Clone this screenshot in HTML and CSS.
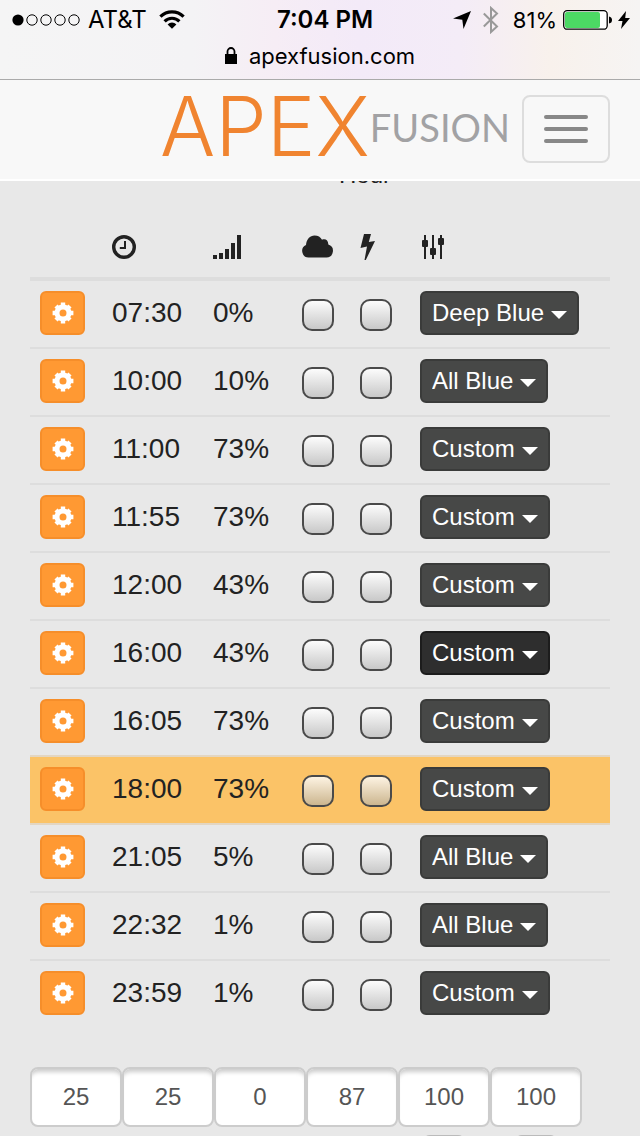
FILE: index.html
```html
<!DOCTYPE html>
<html lang="en">

<head>
    <meta charset="UTF-8">
    <title>Apex Fusion</title>
    <meta name="viewport" content="width=device-width, initial-scale=1.0" />
    <link rel="stylesheet" href="styles.css">
</head>

<body>
<svg class="symbols" aria-hidden="true">
    <symbol id="cog" viewBox="0 0 22 22">
        <g fill="none" stroke="#fff">
            <circle cx="11" cy="11" r="6" stroke-width="5" />
            <path stroke-width="4.4" d="M11 .6v4M11 17.400v4M.6 11h4M17.400 11h4M4 4l2.500 2.500M15.500 15.500L18 18M18 4l-2.500 2.500M6.500 15.500L4 18" />
        </g>
    </symbol>
</svg>
<header class="status">
    <div class="status-bar">
        <div class="status-left">
            <svg width="68" height="12" viewBox="0 0 68 12">
                <circle cx="6" cy="6" r="5.6" />
                <g fill="none" stroke="#000">
                    <circle cx="20" cy="6" r="5.2" /><circle cx="34" cy="6" r="5.2" /><circle cx="48" cy="6" r="5.2" /><circle cx="62" cy="6" r="5.2" />
                </g>
            </svg>
            <span class="carrier">AT&amp;T</span>
            <svg width="26" height="20" viewBox="0 0 26 20">
                <g fill="none" stroke="#000" stroke-width="3.2">
                    <path d="M1.4 6.6a16.4 16.4 0 0 1 23.2 0" />
                    <path d="M5.6 11.3a10.5 10.5 0 0 1 14.8 0" />
                </g>
                <path d="M8.6 14.4a6.2 6.2 0 0 1 8.8 0L13 18.8z" />
            </svg>
        </div>
        <span class="time">7:04 PM</span>
        <div class="status-right">
            <div class="radios">
                <svg width="18" height="18" viewBox="0 0 18 18"><path d="M18 0L10.5 18 9.3 8.7 0 7.5z" /></svg>
                <svg width="16" height="28" viewBox="0 0 16 28"><path d="M.8 7.5L14 20.5 8 26V2l6 5.500L.8 20.500" fill="none" stroke="#999" stroke-width="2" /></svg>
            </div>
            <span>81%</span>
            <svg width="49" height="20" viewBox="0 0 49 20">
                <rect x=".7" y=".7" width="43.500" height="18.500" rx="3.500" fill="#fff" stroke="#000" stroke-width="1.300" />
                <rect x="2" y="2" width="35" height="16" rx="2" fill="#4cd964" />
                <path d="M46 6.500q3 .5 3 3.500t-3 3.500z" />
            </svg>
            <svg width="12" height="18" viewBox="0 0 12 18"><path d="M8 0L0 10h4.500L3 18l9-11H7.200z" /></svg>
        </div>
    </div>
    <div class="address">
        <svg width="12" height="17" viewBox="0 0 12 17">
            <path d="M0 7h12v10H0z" />
            <path d="M2.500 8V4.500a3.500 3.500 0 0 1 7 0V8" fill="none" stroke="#000" stroke-width="1.800" />
        </svg>
        <span>apexfusion.com</span>
    </div>
</header>

<nav class="navbar">
    <a class="brand" href="#"><span class="brand-apex">APEX</span><span class="brand-fusion">FUSION</span></a>
    <button class="toggle" type="button" aria-label="Toggle navigation">
        <span class="icon-bar"></span>
        <span class="icon-bar"></span>
        <span class="icon-bar"></span>
    </button>
</nav>

<main class="content">
    <div class="axis-label">Hour</div>
    <table class="schedule">
        <colgroup>
            <col class="col-edit"><col class="col-time"><col class="col-level"><col class="col-cloud"><col class="col-storm"><col>
        </colgroup>
        <thead>
            <tr>
                <th></th>
                <th><svg role="img" aria-label="Time" width="24" height="24" viewBox="0 0 24 24" fill="none" stroke="#222"><circle cx="12" cy="12" r="10.300" stroke-width="3.400" /><path d="M13 6v7H7.800" stroke-width="2" /></svg></th>
                <th><svg role="img" aria-label="Intensity" width="28" height="24" viewBox="0 0 28 24" fill="#222"><path d="M0 20h4v4H0zM6 18h4v6H6zM12 14h4v10h-4zM18 8h4v16h-4zM24 0h4v24h-4z" /></svg></th>
                <th><svg role="img" aria-label="Clouds" width="31" height="24" viewBox="0 0 31 24" fill="#222"><path d="M7 22.500a6.500 6.500 0 0 1-3-12.400C4.500 4 8 .5 12.500.5c3.500 0 6 1.500 7.500 4.300 3.400-1.500 6.500.8 6.300 4.800A6.600 6.600 0 0 1 24.500 22.500z" /></svg></th>
                <th><svg role="img" aria-label="Lightning" width="15" height="26" viewBox="0 0 15 26" fill="#222"><path d="M4 0h7L8.800 8 15 7 5.800 26H4.500L7 12.500.5 14z" /></svg></th>
                <th><svg role="img" aria-label="Profile" width="24" height="24" viewBox="0 0 24 24" fill="#222"><path d="M4 0h2v24H4zM12 0h2v24h-2zM20 0h2v24h-2z" /><rect x="2" y="5" width="6" height="7" rx="1" /><rect x="10" y="13" width="6" height="7" rx="1" /><rect x="18" y="3" width="6" height="7" rx="1" /></svg></th>
            </tr>
        </thead>
        <tbody>
            <tr>
                <td><button class="edit" type="button" aria-label="Edit 07:30"><svg><use href="#cog" /></svg></button></td>
                <td>07:30</td>
                <td>0%</td>
                <td><input type="checkbox" aria-label="Clouds 07:30"></td>
                <td><input type="checkbox" aria-label="Lightning 07:30"></td>
                <td><select class="profile" aria-label="Profile 07:30"><option selected>Deep Blue</option><option>All Blue</option><option>Custom</option></select></td>
            </tr>
            <tr>
                <td><button class="edit" type="button" aria-label="Edit 10:00"><svg><use href="#cog" /></svg></button></td>
                <td>10:00</td>
                <td>10%</td>
                <td><input type="checkbox" aria-label="Clouds 10:00"></td>
                <td><input type="checkbox" aria-label="Lightning 10:00"></td>
                <td><select class="profile" aria-label="Profile 10:00"><option>Deep Blue</option><option selected>All Blue</option><option>Custom</option></select></td>
            </tr>
            <tr>
                <td><button class="edit" type="button" aria-label="Edit 11:00"><svg><use href="#cog" /></svg></button></td>
                <td>11:00</td>
                <td>73%</td>
                <td><input type="checkbox" aria-label="Clouds 11:00"></td>
                <td><input type="checkbox" aria-label="Lightning 11:00"></td>
                <td><select class="profile" aria-label="Profile 11:00"><option>Deep Blue</option><option>All Blue</option><option selected>Custom</option></select></td>
            </tr>
            <tr>
                <td><button class="edit" type="button" aria-label="Edit 11:55"><svg><use href="#cog" /></svg></button></td>
                <td>11:55</td>
                <td>73%</td>
                <td><input type="checkbox" aria-label="Clouds 11:55"></td>
                <td><input type="checkbox" aria-label="Lightning 11:55"></td>
                <td><select class="profile" aria-label="Profile 11:55"><option>Deep Blue</option><option>All Blue</option><option selected>Custom</option></select></td>
            </tr>
            <tr>
                <td><button class="edit" type="button" aria-label="Edit 12:00"><svg><use href="#cog" /></svg></button></td>
                <td>12:00</td>
                <td>43%</td>
                <td><input type="checkbox" aria-label="Clouds 12:00"></td>
                <td><input type="checkbox" aria-label="Lightning 12:00"></td>
                <td><select class="profile" aria-label="Profile 12:00"><option>Deep Blue</option><option>All Blue</option><option selected>Custom</option></select></td>
            </tr>
            <tr>
                <td><button class="edit" type="button" aria-label="Edit 16:00"><svg><use href="#cog" /></svg></button></td>
                <td>16:00</td>
                <td>43%</td>
                <td><input type="checkbox" aria-label="Clouds 16:00"></td>
                <td><input type="checkbox" aria-label="Lightning 16:00"></td>
                <td><select class="profile active" aria-label="Profile 16:00"><option>Deep Blue</option><option>All Blue</option><option selected>Custom</option></select></td>
            </tr>
            <tr>
                <td><button class="edit" type="button" aria-label="Edit 16:05"><svg><use href="#cog" /></svg></button></td>
                <td>16:05</td>
                <td>73%</td>
                <td><input type="checkbox" aria-label="Clouds 16:05"></td>
                <td><input type="checkbox" aria-label="Lightning 16:05"></td>
                <td><select class="profile" aria-label="Profile 16:05"><option>Deep Blue</option><option>All Blue</option><option selected>Custom</option></select></td>
            </tr>
            <tr class="current">
                <td><button class="edit" type="button" aria-label="Edit 18:00"><svg><use href="#cog" /></svg></button></td>
                <td>18:00</td>
                <td>73%</td>
                <td><input type="checkbox" aria-label="Clouds 18:00"></td>
                <td><input type="checkbox" aria-label="Lightning 18:00"></td>
                <td><select class="profile" aria-label="Profile 18:00"><option>Deep Blue</option><option>All Blue</option><option selected>Custom</option></select></td>
            </tr>
            <tr>
                <td><button class="edit" type="button" aria-label="Edit 21:05"><svg><use href="#cog" /></svg></button></td>
                <td>21:05</td>
                <td>5%</td>
                <td><input type="checkbox" aria-label="Clouds 21:05"></td>
                <td><input type="checkbox" aria-label="Lightning 21:05"></td>
                <td><select class="profile" aria-label="Profile 21:05"><option>Deep Blue</option><option selected>All Blue</option><option>Custom</option></select></td>
            </tr>
            <tr>
                <td><button class="edit" type="button" aria-label="Edit 22:32"><svg><use href="#cog" /></svg></button></td>
                <td>22:32</td>
                <td>1%</td>
                <td><input type="checkbox" aria-label="Clouds 22:32"></td>
                <td><input type="checkbox" aria-label="Lightning 22:32"></td>
                <td><select class="profile" aria-label="Profile 22:32"><option>Deep Blue</option><option selected>All Blue</option><option>Custom</option></select></td>
            </tr>
            <tr>
                <td><button class="edit" type="button" aria-label="Edit 23:59"><svg><use href="#cog" /></svg></button></td>
                <td>23:59</td>
                <td>1%</td>
                <td><input type="checkbox" aria-label="Clouds 23:59"></td>
                <td><input type="checkbox" aria-label="Lightning 23:59"></td>
                <td><select class="profile" aria-label="Profile 23:59"><option>Deep Blue</option><option>All Blue</option><option selected>Custom</option></select></td>
            </tr>
        </tbody>
    </table>

    <div class="channels">
        <div class="channel"><input class="value" type="text" value="25" aria-label="Channel 1"><input class="slider" type="range" value="25" aria-label="Channel 1 level"></div>
        <div class="channel"><input class="value" type="text" value="25" aria-label="Channel 2"><input class="slider" type="range" value="25" aria-label="Channel 2 level"></div>
        <div class="channel"><input class="value" type="text" value="0" aria-label="Channel 3"><input class="slider" type="range" value="0" aria-label="Channel 3 level"></div>
        <div class="channel"><input class="value" type="text" value="87" aria-label="Channel 4"><input class="slider" type="range" value="87" aria-label="Channel 4 level"></div>
        <div class="channel"><input class="value" type="text" value="100" aria-label="Channel 5"><input class="slider" type="range" value="100" aria-label="Channel 5 level"></div>
        <div class="channel"><input class="value" type="text" value="100" aria-label="Channel 6"><input class="slider" type="range" value="100" aria-label="Channel 6 level"></div>
    </div>
</main>
</body>

</html>
```

FILE: styles.css
```css
* {
    box-sizing: border-box;
    margin: 0;
    padding: 0;
}

body {
    display: flex;
    flex-direction: column;
    height: 100vh;
    overflow: hidden;
    background: #e8e8e8;
    color: #222;
    font-family: "Liberation Sans", Arial, sans-serif;
    font-size: 28px;
}

svg {
    display: block;
    flex: none;
}

.symbols {
    display: none;
}

/* status bar and address */
.status {
    flex: none;
    border-bottom: 1px solid #aaa;
    background: linear-gradient(90deg, #f5f5f5 0%, #f4f3f5 30%, #f6edf5 43%, #f3eaf8 56%, #f4ecf7 72%, #f8f1ec 86%, #f6f4f3 100%);
    color: #000;
    font-family: Inter, Roboto, sans-serif;
    font-size: 22px;
    line-height: 30px;
}

.status-bar {
    display: grid;
    grid-template-columns: 1fr auto 1fr;
    align-items: center;
    height: 40px;
    padding: 0 10px 0 12px;
}

.status-left,
.status-right {
    display: flex;
    align-items: center;
}

.status-left {
    gap: 8px;
}

.status-right {
    justify-content: flex-end;
    gap: 6px;
}

.radios {
    display: flex;
    align-items: center;
    gap: 12px;
    margin-right: 8px;
}

.carrier {
    margin-right: 4px;
    font-size: 24px;
}

.time {
    padding-left: 8px;
    font-size: 24px;
    font-weight: 600;
}

.address {
    display: flex;
    align-items: center;
    justify-content: center;
    gap: 12px;
    height: 39px;
    padding-bottom: 8px;
}

/* navbar */
.navbar {
    display: flex;
    flex: none;
    align-items: center;
    justify-content: flex-end;
    gap: 12px;
    padding: 15px 30px 16px;
    border-bottom: 2px solid #fff;
    background: #f8f8f8;
}

.brand {
    display: flex;
    align-items: flex-start;
    height: 68px;
    text-decoration: none;
    line-height: 64px;
}

.brand-apex {
    color: #f08430;
    font-family: Inter, sans-serif;
    font-size: 82px;
    font-weight: 300;
}

.brand-fusion {
    color: #a2a2a4;
    font-family: Lato, sans-serif;
    font-size: 38px;
}

.toggle {
    display: flex;
    flex-direction: column;
    align-items: center;
    justify-content: center;
    gap: 8px;
    width: 88px;
    height: 68px;
    border: 2px solid #ddd;
    border-radius: 8px;
    background: transparent;
}

.icon-bar {
    width: 44px;
    height: 4px;
    border-radius: 2px;
    background: #888;
}

/* lighting schedule */
.content {
    flex: 1;
    overflow: hidden;
    padding: 0 30px;
}

.axis-label {
    margin-top: -20px;
    padding-left: 90px;
    font-size: 24px;
    line-height: 28px;
    text-align: center;
}

.schedule {
    width: 100%;
    margin-top: 44px;
    border-collapse: separate;
    border-spacing: 0;
    table-layout: fixed;
}

.col-edit {
    width: 72px;
}

.col-time {
    width: 101px;
}

.col-level {
    width: 89px;
}

.col-cloud {
    width: 58px;
}

.col-storm {
    width: 60px;
}

th {
    height: 48px;
    padding: 0 10px 16px;
    border-bottom: 4px solid #ddd;
    vertical-align: middle;
}

td {
    height: 68px;
    padding: 10px 10px 12px;
    border-top: 2px solid #ddd;
    line-height: 44px;
    vertical-align: top;
}

tbody tr:first-child td {
    height: 66px;
    border-top: 0;
}

td > * {
    display: block;
}

.edit {
    display: flex;
    align-items: center;
    justify-content: center;
    width: 45px;
    height: 44px;
    border: 2px solid #f68e2a;
    border-radius: 6px;
    background: #ff9933;
}

.edit svg {
    width: 22px;
    height: 22px;
}

input[type=checkbox] {
    appearance: none;
    width: 32px;
    height: 32px;
    margin-top: 8px;
    border: 2px solid #4a4a4a;
    border-radius: 10px;
    background: linear-gradient(#fcfcfc, #c8c8c8);
}

.profile {
    appearance: none;
    field-sizing: content;
    height: 44px;
    padding: 0 33px 0 10px;
    border: 2px solid #3a3b3a;
    border-radius: 6px;
    background: #474847 url("data:image/svg+xml,%3Csvg xmlns='http://www.w3.org/2000/svg' width='16' height='8'%3E%3Cpath d='M0 0h16L8 8z' fill='white'/%3E%3C/svg%3E") no-repeat right 10px top 18px;
    color: #fff;
    font-family: inherit;
    font-size: 24px;
    line-height: 40px;
}

.profile.active {
    border-color: #1c1c1c;
    background-color: #2e2e2e;
}

.current td {
    background: #fbc367;
}

.current td,
.current + tr td {
    border-top-color: #e3d6c2;
}

.current input[type=checkbox] {
    background: linear-gradient(#fdf3e2, #ccb68f);
}

/* channel values */
.channels {
    display: flex;
    margin-top: 40px;
}

.channel {
    width: 92px;
}

.value {
    display: block;
    width: 100%;
    height: 60px;
    border: 2px solid #ccc;
    border-radius: 8px;
    background: #fff;
    box-shadow: inset 0 6px 4px -3px #ccc;
    color: #555;
    font-family: inherit;
    font-size: 24px;
    text-align: center;
}

.slider {
    display: block;
    appearance: none;
    width: 44px;
    height: 300px;
    margin: 8px auto 0;
    background: transparent;
    direction: rtl;
    writing-mode: vertical-lr;
}

.slider::-webkit-slider-thumb {
    appearance: none;
    width: 44px;
    height: 44px;
    border: 2px solid #bbb;
    border-radius: 8px;
    background: #eee;
}
```
